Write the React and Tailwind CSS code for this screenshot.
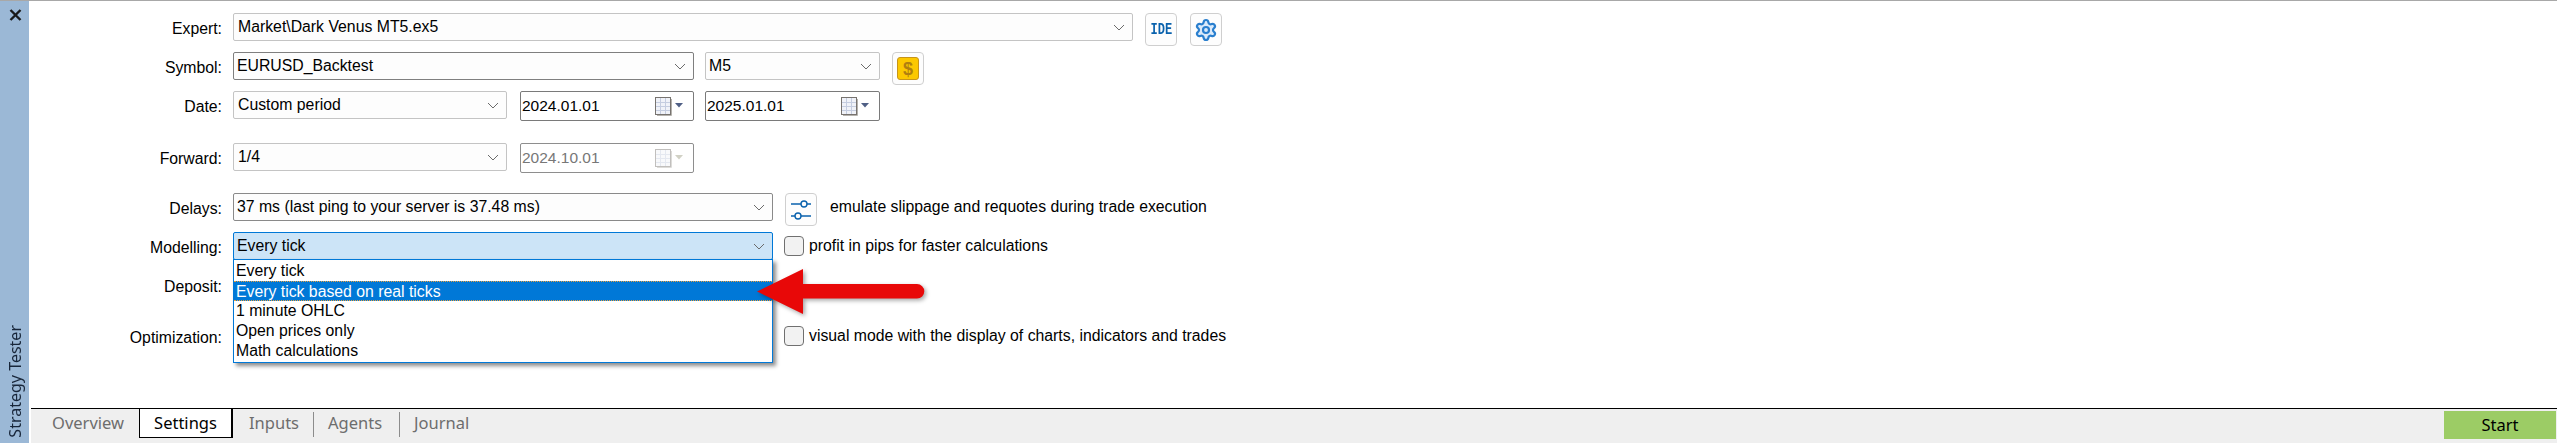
import React from "react";
import { Settings as Gear } from "lucide-react";

const Chevron = ({ className = "" }) => (
  <svg width="12" height="7" viewBox="0 0 12 7" className={"shrink-0 " + className}>
    <path d="M1 1l5 5 5-5" fill="none" stroke="#6b6b6b" strokeWidth="1" />
  </svg>
);

const Combo = ({ w, border = "border-[#c4c4c4]", bg = "bg-[#fdfdfd]", pl = "pl-[3px]", children, inner }) => (
  <div className={`relative flex h-[28px] ${w} ${border} ${bg} ${pl} shrink-0 items-center justify-between rounded-[2px] border pr-[7px]`}>
    <span>{children}</span>
    <Chevron />
    {inner}
  </div>
);

const Calendar = ({ disabled }) => (
  <svg width="29" height="19" viewBox="0 0 29 19" className="shrink-0" style={{ opacity: disabled ? 0.45 : 1 }}>
    <rect x="0.5" y="0.5" width="15" height="17" fill="#f0f2f8" stroke="#77736f" />
    <path d="M16.5 2v16.5H2" fill="none" stroke="#b5b2ad" />
    <path d="M5.5 1v16M10.5 1v16M1 5.5h14M1 9.5h14M1 13.5h14" stroke="#c5cde0" strokeWidth="1" />
    <path d="M20 6h8l-4 4.5z" fill={disabled ? "#9a9a80" : "#4f5f85"} />
  </svg>
);

const DateBox = ({ value, w = "w-[174px]", disabled }) => (
  <div className={`flex h-[30px] ${w} shrink-0 items-center justify-between rounded-[2px] border pl-[1px] pr-[9px] ${disabled ? "border-[#8e8e8e] text-[#777777]" : "border-[#7a7a7a] text-black"}`}>
    <span className="text-[15.5px]">{value}</span>
    <Calendar disabled={disabled} />
  </div>
);

const IconBtn = ({ children, className = "" }) => (
  <div className={`flex h-[33px] w-[32px] shrink-0 items-center justify-center rounded-[4px] border border-[#cfcfcf] bg-[#fdfdfd] ${className}`}>
    {children}
  </div>
);

const Label = ({ children }) => (
  <div className="w-[191px] shrink-0 pt-[2px] pr-0 text-right leading-[28px]">{children}</div>
);

const Row = ({ label, className = "", children }) => (
  <div className={`flex h-[28px] items-start ${className}`}>
    <Label>{label}</Label>
    <div className="ml-[11px] flex items-start">{children}</div>
  </div>
);

const Check = ({ children }) => (
  <div className="ml-[11px] flex h-[28px] items-center">
    <div className="h-[20px] w-[20px] shrink-0 rounded-[4px] border border-[#707070] bg-[#f2f2f2]" />
    <span className="ml-[5px]">{children}</span>
  </div>
);

const items = ["Every tick", "Every tick based on real ticks", "1 minute OHLC", "Open prices only", "Math calculations"];

export default function App() {
  return (
    <div className="flex h-[443px] w-[2557px] overflow-hidden border-t border-[#a8a8a8] bg-white font-['Liberation_Sans',sans-serif] text-[15.8px] text-black">
      <aside className="flex w-[29px] shrink-0 flex-col items-center justify-between bg-[#9bb8d6] pb-[5px] pt-[8px]">
        <svg width="13" height="12" viewBox="0 0 13 12" className="ml-[1px]">
          <path d="M1.5 1l10 10M11.5 1l-10 10" stroke="#1a1a1a" strokeWidth="2.4" />
        </svg>
        <span className="rotate-180 font-['Noto_Sans',sans-serif] text-[16px] leading-[20px] text-[#18263a] [writing-mode:vertical-rl]">
          Strategy Tester
        </span>
      </aside>

      <main className="relative flex min-w-0 flex-1 flex-col">
        <div className="flex-1 pl-[2px] pt-[12px]">
          <Row label="Expert:">
            <Combo w="w-[900px]" pl="pl-[4px]">Market\Dark Venus MT5.ex5</Combo>
            <IconBtn className="ml-[12px]">
              <span className="inline-block scale-x-75 font-['Liberation_Mono',monospace] text-[16px] font-bold leading-none text-[#0a62ad]">IDE</span>
            </IconBtn>
            <IconBtn className="ml-[13px]">
              <Gear size={24} strokeWidth={2.2} color="#2a7fce" fill="#dbeafa" />
            </IconBtn>
          </Row>

          <Row label="Symbol:" className="mt-[11px]">
            <Combo w="w-[461px]" border="border-[#7f7f7f]">EURUSD_Backtest</Combo>
            <Combo w="w-[175px] ml-[11px]">M5</Combo>
            <IconBtn className="ml-[12px]">
              <div className="flex h-[23px] w-[22px] items-center justify-center rounded-[3px] border border-[#c8951a] bg-[#fcc800] text-[18px] font-bold leading-none text-[#b07f10]">$</div>
            </IconBtn>
          </Row>

          <Row label="Date:" className="mt-[11px]">
            <Combo w="w-[274px]" pl="pl-[4px]">Custom period</Combo>
            <div className="ml-[13px]"><DateBox value="2024.01.01" /></div>
            <div className="ml-[11px]"><DateBox value="2025.01.01" w="w-[175px]" /></div>
          </Row>

          <Row label="Forward:" className="mt-[24px]">
            <Combo w="w-[274px]" pl="pl-[4px]">1/4</Combo>
            <div className="ml-[13px]"><DateBox value="2024.10.01" disabled /></div>
          </Row>

          <Row label="Delays:" className="mt-[22px]">
            <Combo w="w-[540px]" border="border-[#8a8a8a]">37 ms (last ping to your server is 37.48 ms)</Combo>
            <IconBtn className="ml-[12px]">
              <svg width="20" height="24" viewBox="0 0 20 24" fill="none" stroke="#0a62ad" strokeWidth="1.4">
                <path d="M0 6h10M16 6h4M0 18h4M10 18h10" />
                <circle cx="13" cy="6" r="3" />
                <circle cx="7" cy="18" r="3" />
              </svg>
            </IconBtn>
            <span className="ml-[13px] leading-[28px]">emulate slippage and requotes during trade execution</span>
          </Row>

          <Row label="Modelling:" className="mt-[11px]">
            <Combo
              w="w-[540px]"
              border="border-[#0078d7]"
              bg="bg-[#cce4f7]"
              pl="pl-[3px]"
              inner={
                <ul className="absolute left-[-1px] right-[-1px] top-[26px] z-10 border border-[#0078d7] bg-white py-[1px] shadow-[3px_3px_4px_rgba(0,0,0,0.45)]">
                  {items.map((t, i) => (
                    <li
                      key={t}
                      className={`h-[20px] pl-[2px] leading-[20px] ${i === 1 ? "border-y border-dotted border-[#e8a040] bg-[#0078d7] leading-[18px] text-white" : ""}`}
                    >
                      {t}
                    </li>
                  ))}
                </ul>
              }
            >
              Every tick
            </Combo>
            <Check>profit in pips for faster calculations</Check>
          </Row>

          <Row label="Deposit:" className="mt-[11px]" />

          <Row label="Optimization:" className="mt-[23px]">
            <div className="w-[540px] shrink-0" />
            <Check>visual mode with the display of charts, indicators and trades</Check>
          </Row>
        </div>

        <nav className="ml-[2px] flex h-[35px] shrink-0 items-start border-t border-black bg-[#efefef] font-['Noto_Sans',sans-serif] text-[16.5px] leading-[26px] text-[#6d6d6d]">
          <span className="ml-[21px] mt-[1px] w-[87px]">Overview</span>
          <span className="-mt-px flex h-[30px] w-[94px] items-center justify-center border-b border-l border-r-2 border-t border-black bg-white text-black">Settings</span>
          <span className="ml-[16px] mt-[1px] w-[64px]">Inputs</span>
          <span className="mt-[3px] h-[25px] w-px bg-[#8c8c8c]" />
          <span className="ml-[14px] mt-[1px] w-[71px]">Agents</span>
          <span className="mt-[3px] h-[25px] w-px bg-[#8c8c8c]" />
          <span className="ml-[14px] mt-[1px]">Journal</span>
          <button className="ml-auto mr-[1px] mt-[2px] h-[28px] w-[112px] bg-[#9ccc65] text-center text-[16.5px] leading-[28px] text-black">Start</button>
        </nav>

        <svg
          width="172"
          height="50"
          viewBox="0 0 172 50"
          className="absolute left-[728px] top-[267px] z-20 drop-shadow-[2px_2px_2px_rgba(0,0,0,0.35)]"
        >
          <path d="M0 23.5L46 1v15h114a7.2 7.2 0 0 1 0 14.6H46V46z" fill="#e80808" />
        </svg>
      </main>
    </div>
  );
}
